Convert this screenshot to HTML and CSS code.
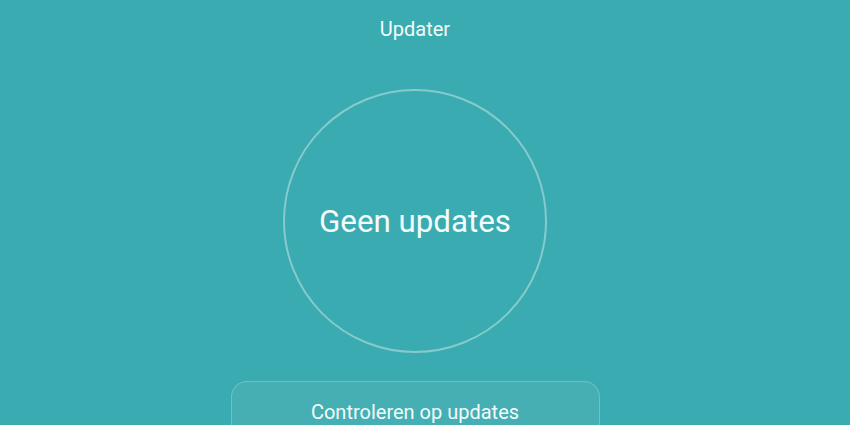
FILE: index.html
```html
<!DOCTYPE html>
<html>
<head>
<meta charset="utf-8">
<link rel="stylesheet" href="styles.css">
</head>
<body>
<div class="app">
  <div class="title">Updater</div>
  <div class="circle"><span class="status">Geen updates</span></div>
  <div class="button">Controleren op updates</div>
</div>
</body>
</html>
```
FILE: styles.css
```css
html, body {
  margin: 0;
  padding: 0;
  background: #3aabb0;
  height: 100%;
  overflow: hidden;
}
.app {
  width: 830px;
  display: flex;
  flex-direction: column;
  align-items: center;
  font-family: Roboto, "Liberation Sans", sans-serif;
  color: #f4fbfb;
}
.title {
  margin-top: 17px;
  font-size: 20px;
  line-height: 24px;
  height: 24px;
}
.circle {
  margin-top: 48px;
  width: 260px;
  height: 260px;
  border: 2px solid rgba(255,255,255,0.38);
  border-radius: 50%;
  display: flex;
  align-items: center;
  justify-content: center;
}
.status {
  font-size: 31.3px;
  line-height: 36px;
  margin-top: 2px;
}
.button {
  margin-top: 28px;
  width: 369px;
  height: 60px;
  box-sizing: border-box;
  border: 1px solid rgba(255,255,255,0.22);
  background: rgba(255,255,255,0.06);
  border-radius: 16px;
  text-align: center;
  font-size: 20px;
  padding-top: 18px;
  line-height: 24px;
}
```
